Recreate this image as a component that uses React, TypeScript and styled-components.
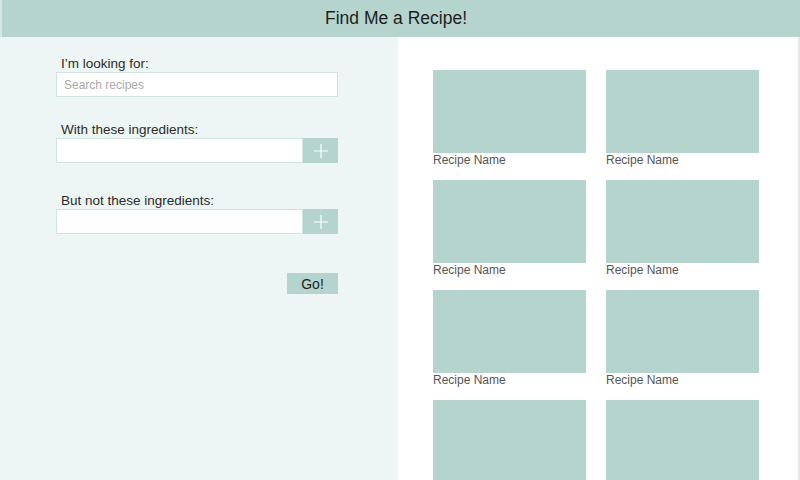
import * as React from 'react';
import styled, { createGlobalStyle } from 'styled-components';

const GlobalStyle = createGlobalStyle`
    html, body {
        margin: 0;
        padding: 0;
        height: 100%;
        overflow: hidden;
    }
    body {
        font-family: "Liberation Sans", Arial, sans-serif;
        color: #222;
    }
    #root {
        height: 100vh;
    }
`;

const Page = styled.div`
    height: 100vh;
    display: flex;
    flex-direction: column;
    background: #fff;
`;

const Header = styled.header`
    flex: 0 0 37px;
    display: flex;
    align-items: center;
    justify-content: center;
    padding-right: 10px;
    background: #b5d4ce;
    border-left: 2px solid #d6e8e4;
    font-size: 17.5px;
    color: #1e1e1e;
`;

const Body = styled.div`
    flex: 1;
    display: flex;
    min-height: 0;
`;

const SearchPanel = styled.aside`
    width: 398px;
    flex: 0 0 398px;
    background: #eef6f5;
    padding: 19px 0 0 56px;
    box-sizing: border-box;
`;

const Form = styled.form`
    width: 282px;
    display: flex;
    flex-direction: column;
`;

const Field = styled.div<{ $space: number }>`
    display: flex;
    flex-direction: column;
    margin-top: ${(p) => p.$space}px;
`;

const Label = styled.label`
    font-size: 13.5px;
    line-height: 16px;
    padding-left: 5px;
    color: #2a2a2a;
`;

const InputRow = styled.div`
    display: flex;
    height: 25px;
`;

const TextInput = styled.input`
    flex: 1;
    min-width: 0;
    height: 25px;
    box-sizing: border-box;
    border: 1px solid #cfe3df;
    background: #fff;
    padding: 0 7px;
    font-family: inherit;
    font-size: 12px;
    color: #333;
    outline: none;

    &::placeholder {
        color: #aaa;
    }
`;

const AddButton = styled.button`
    width: 35px;
    flex: 0 0 35px;
    height: 25px;
    border: 0;
    padding: 0;
    background: #b5d4ce;
    display: flex;
    align-items: center;
    justify-content: center;
`;

const GoButton = styled.button`
    align-self: flex-end;
    margin-top: 39px;
    width: 51px;
    height: 21px;
    border: 0;
    padding: 0;
    background: #b5d4ce;
    font-family: inherit;
    font-size: 14px;
    color: #222;
`;

const Results = styled.main`
    flex: 1;
    background: #fff;
    border-right: 2px solid #e6e6e6;
    padding: 33px 0 0 35px;
    overflow: hidden;
`;

const Grid = styled.div`
    display: grid;
    grid-template-columns: 153px 153px;
    column-gap: 20px;
    row-gap: 13px;
`;

const Card = styled.div`
    display: flex;
    flex-direction: column;
`;

const Thumb = styled.div`
    height: 83px;
    background: #b5d4ce;
`;

const RecipeName = styled.div`
    font-size: 12px;
    line-height: 14px;
    color: #555;
`;

const PlusIcon = () => (
    <svg width="16" height="16" viewBox="0 0 16 16">
        <path d="M8 1v14M1 8h14" stroke="#fff" strokeWidth="1.2" fill="none" />
    </svg>
);

const recipes: (string | null)[] = [
    'Recipe Name', 'Recipe Name',
    'Recipe Name', 'Recipe Name',
    'Recipe Name', 'Recipe Name',
    null, null,
];

export default function App() {
    return (
        <Page>
            <GlobalStyle />
            <Header>Find Me a Recipe!</Header>
            <Body>
                <SearchPanel>
                    <Form onSubmit={(e) => e.preventDefault()}>
                        <Field $space={0}>
                            <Label>I’m looking for:</Label>
                            <InputRow>
                                <TextInput placeholder="Search recipes" />
                            </InputRow>
                        </Field>
                        <Field $space={25}>
                            <Label>With these ingredients:</Label>
                            <InputRow>
                                <TextInput />
                                <AddButton type="button">
                                    <PlusIcon />
                                </AddButton>
                            </InputRow>
                        </Field>
                        <Field $space={30}>
                            <Label>But not these ingredients:</Label>
                            <InputRow>
                                <TextInput />
                                <AddButton type="button">
                                    <PlusIcon />
                                </AddButton>
                            </InputRow>
                        </Field>
                        <GoButton type="submit">Go!</GoButton>
                    </Form>
                </SearchPanel>
                <Results>
                    <Grid>
                        {recipes.map((name, i) => (
                            <Card key={i}>
                                <Thumb />
                                {name && <RecipeName>{name}</RecipeName>}
                            </Card>
                        ))}
                    </Grid>
                </Results>
            </Body>
        </Page>
    );
}
